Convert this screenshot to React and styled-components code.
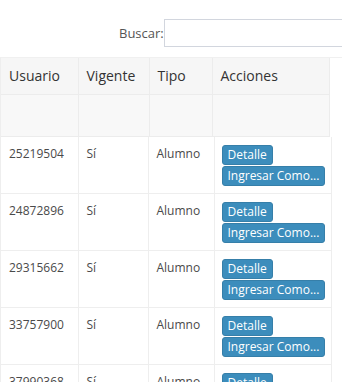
import React from "react";
import styled, { createGlobalStyle } from "styled-components";

const Global = createGlobalStyle`
  html, body { margin: 0; padding: 0; background: #fff; }
  body { font-family: "Open Sans", "DejaVu Sans", sans-serif; overflow: hidden; }
  * { box-sizing: border-box; }
`;

const Page = styled.div`
  width: 342px;
  height: 382px;
  overflow: hidden;
`;

const SearchBar = styled.div`
  height: 57px;
  display: flex;
  align-items: center;
  padding-left: 119px;
  padding-top: 8px;
`;

const Label = styled.label`
  font-size: 13px;
  color: #555;
  display: flex;
  align-items: center;
`;

const Input = styled.input`
  width: 200px;
  height: 28px;
  margin-left: 0;
  border: 1px solid #d2d6de;
  border-radius: 0;
  outline: none;
  font-family: inherit;
`;

const Wrapper = styled.div`
  border-top: 1px solid #f0f0f0;
  border-left: 1px solid #eee;
`;

const Table = styled.table`
  border-collapse: collapse;
  table-layout: fixed;
  width: ${(p) => p.$w}px;
`;

const HeadCell = styled.th`
  background: ${(p) => (p.$filter ? "#f8f8f8" : "#f6f6f6")};
  height: ${(p) => (p.$filter ? 42 : 36)}px;
  border-right: 1px solid #ececec;
  border-bottom: 1px solid #ececec;
  text-align: left;
  font-weight: 500;
  font-size: 14px;
  color: #333;
  padding: 0 8px;
`;

const Cell = styled.td`
  border-right: 1px solid #eee;
  border-bottom: 1px solid #eee;
  vertical-align: top;
  padding: 8px 8px 6px 8px;
  font-size: 12px;
  line-height: 17px;
  color: #4a4a4a;
  height: 57px;
`;

const ActionCell = styled(Cell)`
  padding: 8px 7px 6px 7px;
`;

const Btn = styled.button`
  display: block;
  height: 20px;
  padding: 0 5px;
  margin: 0 0 1px 0;
  background: #3c8dbc;
  border: 1px solid #367fa9;
  border-radius: 3px;
  color: #fff;
  font-family: inherit;
  font-size: 12px;
  line-height: 18px;
  white-space: nowrap;
`;

const rows = ["25219504", "24872896", "29315662", "33757900", "37990368"];
const headW = [77, 71, 63, 117];
const bodyW = [77, 70, 66, 117];

export default function App() {
  return (
    <Page>
      <Global />
      <SearchBar>
        <Label>
          Buscar:
          <Input type="search" />
        </Label>
      </SearchBar>
      <Wrapper>
        <Table $w={328}>
          <colgroup>
            {headW.map((w, i) => (
              <col key={i} style={{ width: w }} />
            ))}
          </colgroup>
          <thead>
            <tr>
              <HeadCell>Usuario</HeadCell>
              <HeadCell>Vigente</HeadCell>
              <HeadCell>Tipo</HeadCell>
              <HeadCell>Acciones</HeadCell>
            </tr>
            <tr>
              <HeadCell $filter />
              <HeadCell $filter />
              <HeadCell $filter />
              <HeadCell $filter />
            </tr>
          </thead>
        </Table>
        <Table $w={330}>
          <colgroup>
            {bodyW.map((w, i) => (
              <col key={i} style={{ width: w }} />
            ))}
          </colgroup>
          <tbody>
            {rows.map((r) => (
              <tr key={r}>
                <Cell>{r}</Cell>
                <Cell>Sí</Cell>
                <Cell>Alumno</Cell>
                <ActionCell>
                  <Btn>Detalle</Btn>
                  <Btn>Ingresar Como...</Btn>
                </ActionCell>
              </tr>
            ))}
          </tbody>
        </Table>
      </Wrapper>
    </Page>
  );
}
